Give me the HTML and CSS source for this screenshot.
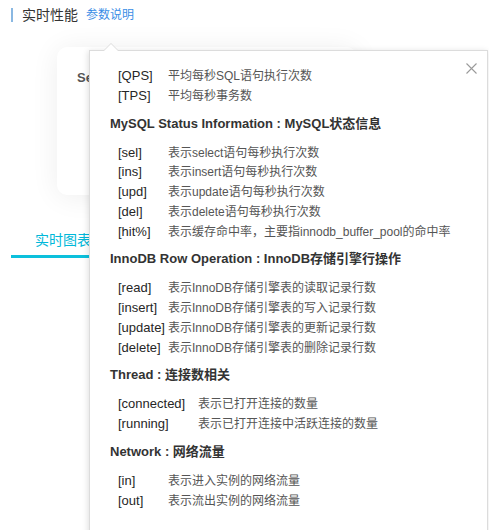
FILE: index.html
```html
<!DOCTYPE html>
<html lang="zh">
<head>
<meta charset="utf-8">
<link rel="stylesheet" href="styles.css">
</head>
<body>
<div class="page">
  <div class="title-row">
    <span class="title">实时性能</span>
    <a class="help-link">参数说明</a>
  </div>
  <div class="card">
    <div class="card-title">Server</div>
  </div>
  <div class="tabs">
    <div class="tab active">实时图表</div>
  </div>

  <div class="popover">
    <span class="arrow"></span>
    <span class="close">
      <svg class="close-icon" width="11" height="11" viewBox="0 0 11 11"><path d="M0.5 0.5L10.5 10.5M10.5 0.5L0.5 10.5" stroke="#9a9a9a" stroke-width="1.1" fill="none"/></svg>
    </span>
    <div class="group">
      <div class="row"><span class="key">[QPS]</span><span class="desc">平均每秒SQL语句执行次数</span></div>
      <div class="row"><span class="key">[TPS]</span><span class="desc">平均每秒事务数</span></div>
    </div>
    <div class="heading">MySQL Status Information : MySQL状态信息</div>
    <div class="group">
      <div class="row"><span class="key">[sel]</span><span class="desc">表示select语句每秒执行次数</span></div>
      <div class="row"><span class="key">[ins]</span><span class="desc">表示insert语句每秒执行次数</span></div>
      <div class="row"><span class="key">[upd]</span><span class="desc">表示update语句每秒执行次数</span></div>
      <div class="row"><span class="key">[del]</span><span class="desc">表示delete语句每秒执行次数</span></div>
      <div class="row"><span class="key">[hit%]</span><span class="desc">表示缓存命中率，主要指innodb_buffer_pool的命中率</span></div>
    </div>
    <div class="heading">InnoDB Row Operation : InnoDB存储引擎行操作</div>
    <div class="group">
      <div class="row"><span class="key">[read]</span><span class="desc">表示InnoDB存储引擎表的读取记录行数</span></div>
      <div class="row"><span class="key">[insert]</span><span class="desc">表示InnoDB存储引擎表的写入记录行数</span></div>
      <div class="row"><span class="key">[update]</span><span class="desc">表示InnoDB存储引擎表的更新记录行数</span></div>
      <div class="row"><span class="key">[delete]</span><span class="desc">表示InnoDB存储引擎表的删除记录行数</span></div>
    </div>
    <div class="heading">Thread : 连接数相关</div>
    <div class="group wide">
      <div class="row"><span class="key">[connected]</span><span class="desc">表示已打开连接的数量</span></div>
      <div class="row"><span class="key">[running]</span><span class="desc">表示已打开连接中活跃连接的数量</span></div>
    </div>
    <div class="heading">Network : 网络流量</div>
    <div class="group">
      <div class="row"><span class="key">[in]</span><span class="desc">表示进入实例的网络流量</span></div>
      <div class="row"><span class="key">[out]</span><span class="desc">表示流出实例的网络流量</span></div>
    </div>
  </div>
</div>
</body>
</html>
```

FILE: styles.css
```css
html, body {
  margin: 0;
  padding: 0;
  background: #fff;
}
body {
  font-family: "Liberation Sans", Arial, "Noto Sans CJK SC", sans-serif;
  color: #333;
  width: 489px;
  height: 530px;
  overflow: hidden;
}
.page {
  position: relative;
  height: 530px;
}
.title-row {
  display: flex;
  align-items: center;
  margin: 8px 0 0 11px;
  height: 14px;
  border-left: 2px solid #8ab8e2;
  padding-left: 9px;
}
.title {
  font-size: 14px;
  color: #333;
  line-height: 14px;
}
.help-link {
  font-size: 12px;
  color: #3a8ee6;
  margin-left: 8px;
  line-height: 14px;
}
.card {
  margin: 25px 0 0 57px;
  width: 300px;
  height: 148px;
  border-radius: 10px;
  background: #fff;
  box-shadow: 0 2px 28px rgba(0, 0, 0, 0.07);
}
.card-title {
  padding: 23px 0 0 20px;
  font-size: 13px;
  font-weight: bold;
  color: #555;
}
.tabs {
  margin: 36px 0 0 11px;
  display: flex;
}
.tab {
  width: 110px;
  font-size: 14px;
  color: #00b8d9;
  padding: 0 0 6px 24px;
  border-bottom: 3px solid #0cc0dc;
  line-height: 18px;
}
.popover {
  position: absolute;
  left: 89px;
  top: 42px;
  width: 399px;
  height: 520px;
  background: #fff;
  border: 1px solid #dcdcdc;
  box-shadow: -1px 1px 6px rgba(0, 0, 0, 0.13);
  box-sizing: border-box;
  padding: 15px 20px 0 20px;
}
.arrow {
  position: absolute;
  top: -8px;
  left: 13px;
  width: 0;
  height: 0;
  border-left: 8px solid transparent;
  border-right: 8px solid transparent;
  border-bottom: 8px solid #dcdcdc;
}
.arrow::after {
  content: "";
  position: absolute;
  left: -7px;
  top: 1px;
  border-left: 7px solid transparent;
  border-right: 7px solid transparent;
  border-bottom: 7px solid #fff;
}
.close {
  position: absolute;
  top: 12px;
  right: 10px;
  display: block;
  width: 11px;
  height: 11px;
}
.close-icon {
  display: block;
}
.group {
  padding-left: 8px;
}
.row {
  display: flex;
  height: 19.75px;
  line-height: 20px;
  white-space: nowrap;
}
.key {
  min-width: 50px;
  font-size: 13px;
  color: #262626;
}
.wide .key {
  min-width: 80px;
}
.desc {
  font-size: 12px;
  color: #555;
}
.heading {
  margin: 8px 0 9px;
  height: 20px;
  line-height: 20px;
  font-size: 13px;
  font-weight: bold;
  color: #333;
  white-space: nowrap;
}
```
